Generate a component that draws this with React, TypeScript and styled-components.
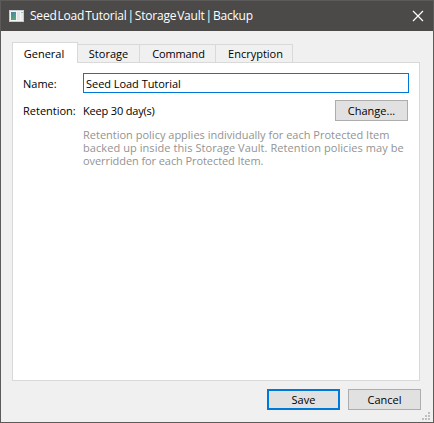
import React from "react";
import styled, { createGlobalStyle } from "styled-components";

const GlobalStyle = createGlobalStyle`
  * { box-sizing: border-box; }
  body { margin: 0; overflow: hidden; }
`;

const Window = styled.div`
  width: 434px;
  height: 423px;
  display: flex;
  flex-direction: column;
  border: 1px solid #5c5b59;
  background: #f0f0f0;
  color: #000;
  font-family: "Open Sans", "Noto Sans", sans-serif;
  font-size: 11px;
  line-height: 13px;
  white-space: nowrap;
`;

const TitleBar = styled.header`
  height: 30px;
  flex: none;
  display: flex;
  align-items: center;
  padding: 0 9px 0 8px;
  background: #4c4a48;
  color: #fff;
`;

const Title = styled.h1`
  flex: 1;
  margin: 0 0 0 6px;
  font-size: 12px;
  line-height: 16px;
  font-weight: 400;
  letter-spacing: -0.22px;
  word-spacing: -1.9px;
`;

const CloseButton = styled.button`
  display: flex;
  padding: 0;
  border: 0;
  background: none;
`;

const Body = styled.main`
  flex: 1;
  display: flex;
  flex-direction: column;
  padding: 11px 12px 11px 11px;
`;

const TabList = styled.nav`
  display: flex;
  align-items: flex-end;
  height: 20px;
`;

const Tab = styled.button<{ $width: number; $active?: boolean; $indent?: number; $tracking?: number }>`
  width: ${(p) => p.$width}px;
  height: ${(p) => (p.$active ? 21 : 18)}px;
  margin-bottom: ${(p) => (p.$active ? -1 : 0)}px;
  padding: ${(p) => (p.$active ? "0 2px 0 0" : `0 0 0 ${p.$indent ?? 0}px`)};
  z-index: ${(p) => (p.$active ? 1 : 0)};
  border: 1px solid #d9d9d9;
  border-bottom: 0;
  border-left-width: ${(p) => (p.$active ? 1 : 0)}px;
  background: ${(p) => (p.$active ? "#fff" : "#f0f0f0")};
  color: inherit;
  font: inherit;
  letter-spacing: ${(p) => p.$tracking ?? 0}px;
`;

const Panel = styled.section`
  width: 408px;
  height: 319px;
  padding: 10px 11px 0 10px;
  border: 1px solid #d9d9d9;
  background: #fff;
`;

const Row = styled.div`
  display: grid;
  grid-template-columns: 60px 1fr auto;
  align-items: center;
  margin-bottom: 7px;
`;

const Label = styled.label`
  letter-spacing: 0;
`;

const Value = styled.span`
  letter-spacing: -0.18px;
`;

const NameInput = styled.input`
  grid-column: 2 / 4;
  width: 326px;
  height: 20px;
  padding: 1px 2px 0;
  border: 1px solid #0078d7;
  outline: 0;
  font: inherit;
  color: inherit;
  letter-spacing: -0.04px;
`;

const Button = styled.button<{ $primary?: boolean }>`
  width: 73px;
  height: 21px;
  padding: 0;
  border: ${(p) => (p.$primary ? "2px solid #0078d7" : "1px solid #adadad")};
  background: #e1e1e1;
  color: inherit;
  font: inherit;
`;

const Hint = styled.p`
  display: grid;
  margin: 7px 0 0 60px;
  color: #939393;
`;

const HintLine = styled.span<{ $tracking: number }>`
  letter-spacing: ${(p) => p.$tracking}px;
`;

const Footer = styled.footer`
  display: flex;
  justify-content: flex-end;
  gap: 8px;
  margin-top: 8px;
`;

const Grip = styled.svg`
  position: absolute;
  left: 422px;
  top: 412px;
`;

function AppIcon() {
  return (
    <svg width="15" height="12" viewBox="0 0 15 12" shapeRendering="crispEdges">
      <defs>
        <linearGradient id="screen" x1="0" y1="0" x2="0.6" y2="1">
          <stop offset="0" stopColor="#477fac" />
          <stop offset="1" stopColor="#57ab75" />
        </linearGradient>
      </defs>
      <rect width="15" height="12" fill="#c8cbcd" />
      <rect x="1" y="1" width="13" height="10" fill="#f5f5f5" />
      <rect x="2" y="2" width="5" height="8" fill="url(#screen)" />
      <rect x="8" y="2" width="3" height="8" fill="#e3e4e6" />
      <rect x="12" y="2" width="2" height="1" fill="#8fc3b4" />
      <rect x="12" y="3" width="2" height="7" fill="#e8eaeb" />
    </svg>
  );
}

export default function App() {
  return (
    <>
      <GlobalStyle />
      <Window>
        <TitleBar>
          <AppIcon />
          <Title>Seed Load Tutorial | Storage Vault | Backup</Title>
          <CloseButton aria-label="Close">
            <svg width="12" height="12" viewBox="0 0 12 12">
              <path d="M1 1 11 11M11 1 1 11" stroke="#fff" strokeWidth="1.2" />
            </svg>
          </CloseButton>
        </TitleBar>
        <Body>
          <TabList>
            <Tab $width={66} $active>General</Tab>
            <Tab $width={62}>Storage</Tab>
            <Tab $width={76} $indent={2} $tracking={-0.15}>Command</Tab>
            <Tab $width={77} $indent={3}>Encryption</Tab>
          </TabList>
          <Panel>
            <Row>
              <Label htmlFor="vault-name">Name:</Label>
              <NameInput id="vault-name" defaultValue="Seed Load Tutorial" />
            </Row>
            <Row>
              <Label>Retention:</Label>
              <Value>Keep 30 day(s)</Value>
              <Button>Change...</Button>
            </Row>
            <Hint>
              <HintLine $tracking={0}>
                Retention policy applies individually for each Protected Item
              </HintLine>
              <HintLine $tracking={0.07}>
                backed up inside this Storage Vault. Retention policies may be
              </HintLine>
              <HintLine $tracking={-0.08}>
                overridden for each Protected Item.
              </HintLine>
            </Hint>
          </Panel>
          <Footer>
            <Button $primary>Save</Button>
            <Button>Cancel</Button>
          </Footer>
        </Body>
      </Window>
      <Grip width="8" height="8" viewBox="0 0 8 8" shapeRendering="crispEdges">
        <path d="M6 0h2v2H6zM3 3h2v2H3zM6 3h2v2H6zM0 6h2v2H0zM3 6h2v2H3zM6 6h2v2H6z" fill="#bfbfbf" />
      </Grip>
    </>
  );
}
